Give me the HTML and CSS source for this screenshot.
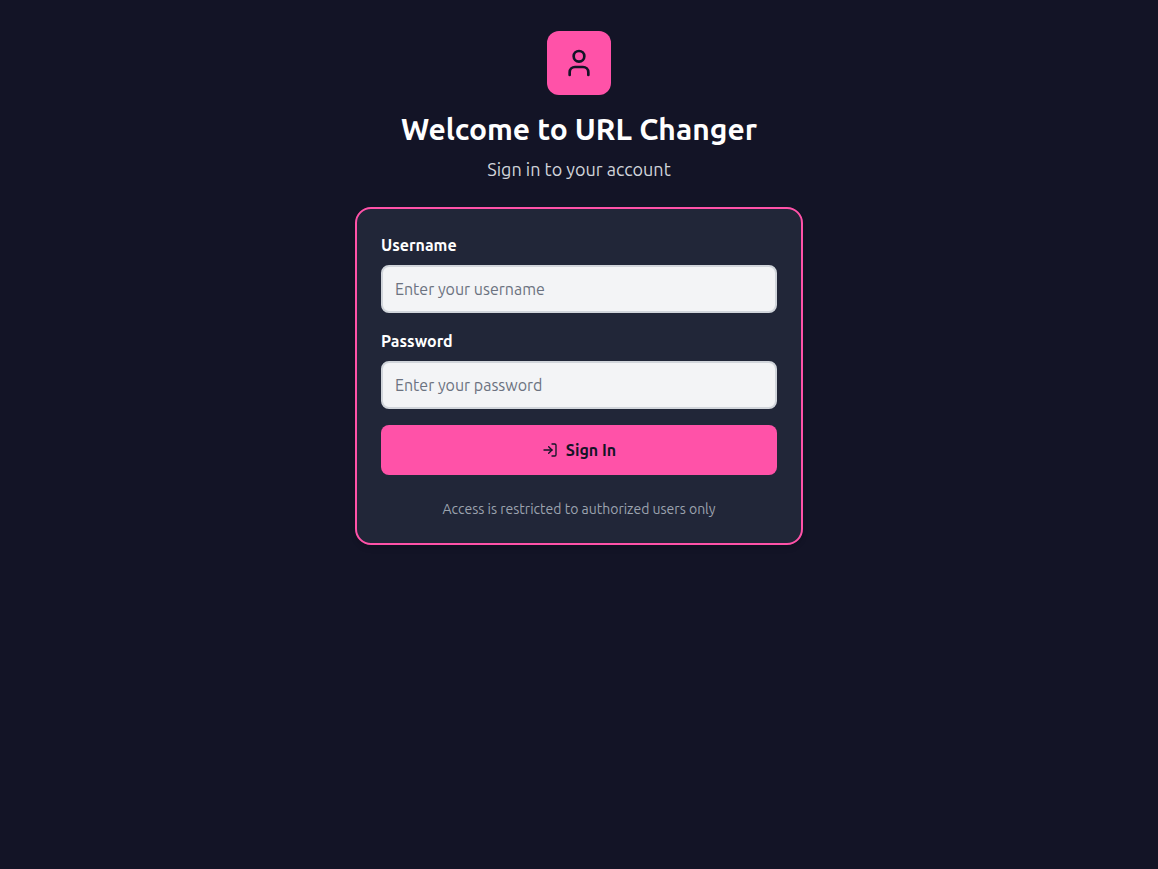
FILE: index.html
```html
<!DOCTYPE html>
<html lang="en">
<head>
  <meta charset="utf-8">
  <meta name="viewport" content="width=device-width, initial-scale=1">
  <title>URL Changer</title>
  <link rel="stylesheet" href="styles.css">
</head>
<body>
  <main class="login">
    <header class="intro">
      <div class="logo">
        <svg width="32" height="32" viewBox="0 0 24 24" fill="none" stroke="currentColor" stroke-width="2" stroke-linecap="round" stroke-linejoin="round" aria-hidden="true">
          <path d="M19 21v-2a4 4 0 0 0-4-4H9a4 4 0 0 0-4 4v2"/>
          <circle cx="12" cy="7" r="4"/>
        </svg>
      </div>
      <h1 class="title">Welcome to URL Changer</h1>
      <p class="subtitle">Sign in to your account</p>
    </header>
    <section class="card">
      <form class="form">
        <div class="field">
          <label class="label" for="username">Username</label>
          <input class="input" id="username" name="username" type="text" placeholder="Enter your username">
        </div>
        <div class="field">
          <label class="label" for="password">Password</label>
          <input class="input" id="password" name="password" type="password" placeholder="Enter your password">
        </div>
        <button class="submit" type="submit">
          <svg width="16" height="16" viewBox="0 0 24 24" fill="none" stroke="currentColor" stroke-width="2" stroke-linecap="round" stroke-linejoin="round" aria-hidden="true">
            <path d="M15 3h4a2 2 0 0 1 2 2v14a2 2 0 0 1-2 2h-4"/>
            <path d="m10 17 5-5-5-5"/>
            <path d="M15 12H3"/>
          </svg>
          <span>Sign In</span>
        </button>
      </form>
      <p class="note">Access is restricted to authorized users only</p>
    </section>
  </main>
</body>
</html>
```

FILE: styles.css
```css
*, *::before, *::after {
  box-sizing: border-box;
}

body {
  margin: 0;
  background: #131426;
  color: #ffffff;
  font-family: Ubuntu, "Open Sans", "Noto Sans", sans-serif;
  font-size: 16px;
  line-height: 24px;
}

.login {
  width: 100%;
  max-width: 448px;
  margin: 0 auto;
  padding: 31px 0;
}

.intro {
  display: flex;
  flex-direction: column;
  align-items: center;
  margin-bottom: 24px;
  text-align: center;
}

.logo {
  display: flex;
  align-items: center;
  justify-content: center;
  width: 64px;
  height: 64px;
  margin-bottom: 16px;
  border-radius: 12px;
  background: #ff52a8;
  color: #131426;
}

.title {
  margin: 0 0 8px;
  font-size: 30px;
  font-weight: 600;
  line-height: 36px;
}

.subtitle {
  margin: 0;
  color: #d1d5db;
  font-size: 18px;
  line-height: 28px;
}

.card {
  padding: 24px;
  border: 2px solid #ff52a8;
  border-radius: 16px;
  background: #212638;
  box-shadow: 0 4px 6px -1px rgba(0, 0, 0, 0.1), 0 2px 4px -2px rgba(0, 0, 0, 0.1);
}

.form {
  display: flex;
  flex-direction: column;
  gap: 16px;
}

.field {
  display: flex;
  flex-direction: column;
  gap: 8px;
}

.label {
  font-weight: 600;
}

.input {
  width: 100%;
  height: 48px;
  padding: 0 12px;
  border: 2px solid #d1d5db;
  border-radius: 8px;
  background: #f3f4f6;
  color: #131426;
  font: inherit;
}

.input::placeholder {
  color: #6b7280;
  opacity: 1;
}

.submit {
  display: flex;
  align-items: center;
  justify-content: center;
  gap: 8px;
  height: 50px;
  padding: 0 16px;
  border: 0;
  border-radius: 8px;
  background: #ff52a8;
  color: #131426;
  font: inherit;
  font-weight: 600;
  cursor: pointer;
}

.note {
  margin: 24px 0 0;
  color: #9ca3af;
  font-size: 14px;
  line-height: 20px;
  text-align: center;
}
```
